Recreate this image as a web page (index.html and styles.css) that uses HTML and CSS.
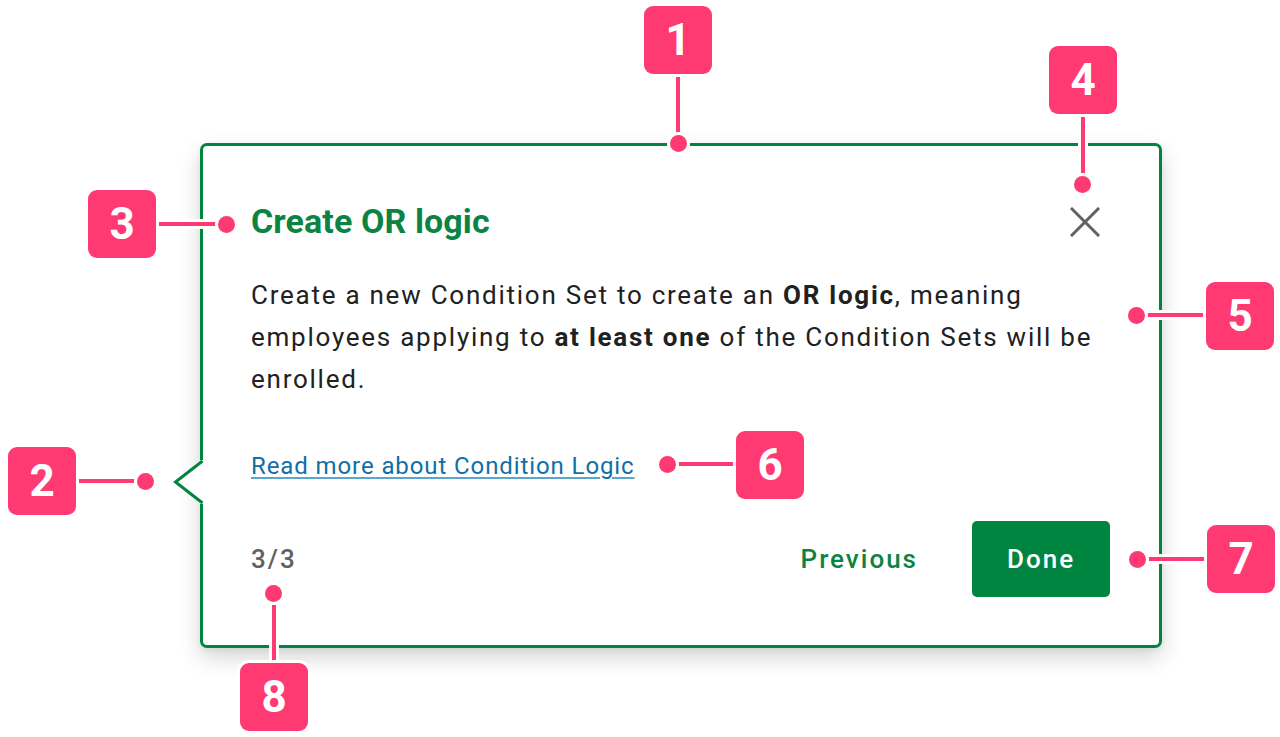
FILE: index.html
```html
<!DOCTYPE html>
<html lang="en">
<head>
<meta charset="utf-8">
<title>Create OR logic</title>
<link rel="stylesheet" href="styles.css">
</head>
<body>
<div class="stage">
  <section class="card">
    <svg class="pointer" width="34" height="50" viewBox="0 0 34 50" aria-hidden="true">
      <path d="M28 2 L3.5 24 L28 46 L34 46 L34 2 Z" fill="#fff"/>
      <path d="M30.5 3 L3.5 24 L30.5 45" fill="none" stroke="#008540" stroke-width="3" stroke-linejoin="miter"/>
    </svg>
    <header class="card-head">
      <h2 class="card-title">Create OR logic</h2>
      <button class="close" aria-label="Close">
        <svg width="30" height="30" viewBox="0 0 30 30"><path d="M2 2 L28 28 M28 2 L2 28" stroke="#616161" stroke-width="3" stroke-linecap="square"/></svg>
      </button>
    </header>
    <p class="card-body">Create a new Condition Set to create an <b>OR logic</b>, meaning employees applying to <b>at least one</b> of the Condition Sets will be enrolled.</p>
    <a class="card-link" href="#">Read more about Condition Logic</a>
    <footer class="card-foot">
      <span class="step">3/3</span>
      <button class="btn-prev">Previous</button>
      <button class="btn-done">Done</button>
    </footer>
  </section>

  <div class="ann a1"><span class="leader"></span><span class="dot"></span><span class="badge">1</span></div>
  <div class="ann a2"><span class="leader"></span><span class="dot"></span><span class="badge">2</span></div>
  <div class="ann a3"><span class="leader"></span><span class="dot"></span><span class="badge">3</span></div>
  <div class="ann a4"><span class="leader"></span><span class="dot"></span><span class="badge">4</span></div>
  <div class="ann a5"><span class="leader"></span><span class="dot"></span><span class="badge">5</span></div>
  <div class="ann a6"><span class="leader"></span><span class="dot"></span><span class="badge">6</span></div>
  <div class="ann a7"><span class="leader"></span><span class="dot"></span><span class="badge">7</span></div>
  <div class="ann a8"><span class="leader"></span><span class="dot"></span><span class="badge">8</span></div>
</div>
</body>
</html>
```
FILE: styles.css
```css
* { box-sizing: border-box; }
html, body { margin: 0; padding: 0; background: #fff; }
body { font-family: Roboto, "Liberation Sans", Arial, sans-serif; color: #212121; }

.stage { position: relative; width: 1280px; height: 737px; overflow: hidden; padding-top: 143px; }

.card {
  position: relative;
  margin-left: 200px;
  width: 962px;
  border: 3px solid #008540;
  border-radius: 7px;
  background: #fff;
  box-shadow: 0 10px 22px rgba(0,0,0,0.16), 0 2px 6px rgba(0,0,0,0.06);
  padding: 55px 49px 48px 48px;
  display: flex;
  flex-direction: column;
}

.pointer { position: absolute; left: -31px; top: 312px; }

.card-head { display: flex; align-items: center; justify-content: space-between; height: 40px; }
.card-title { margin: 0; font-size: 34px; line-height: 40px; font-weight: 700; color: #0b8443; letter-spacing: 0.1px; }
.close { border: 0; background: none; padding: 0; margin: 2px 10px 0 0; width: 30px; height: 30px; display: flex; }

.card-body { margin: 33px 0 0; font-size: 26px; line-height: 42px; color: #212121; letter-spacing: 1.75px; }
.card-body b { font-weight: 700; }

.card-link { margin-top: 50px; align-self: flex-start; font-size: 24px; line-height: 32px; color: #106fa6; letter-spacing: 0.9px; text-decoration: underline; text-decoration-thickness: 2px; text-underline-offset: 3px; text-decoration-color: #5aa6d0; }

.card-foot { margin-top: 39px; display: flex; align-items: center; }
.step { font-size: 26px; font-weight: 500; color: #616161; margin-right: auto; letter-spacing: 2px; }
.btn-prev { border: 0; background: none; padding: 0; font: 500 26px Roboto, sans-serif; letter-spacing: 2px; color: #0b8443; margin-right: 54px; }
.btn-done { border: 0; border-radius: 5px; background: #008540; color: #fff; width: 138px; height: 76px; font: 500 26px Roboto, sans-serif; letter-spacing: 2px; }

/* annotations */
.ann { position: absolute; left: 0; top: 0; width: 0; height: 0; }
.badge {
  position: absolute;
  width: 68px; height: 68px;
  border-radius: 9px;
  background: #ff3a72;
  color: #fff;
  font-size: 44px; font-weight: 700;
  display: flex; align-items: center; justify-content: center;
  box-shadow: 0 0 0 3px #fff;
  z-index: 3;
}
.leader { position: absolute; background: #ff3a72; box-shadow: 0 0 0 3px #fff; z-index: 1; }
.dot { position: absolute; width: 17px; height: 17px; border-radius: 50%; background: #ff3a72; box-shadow: 0 0 0 3px #fff; z-index: 2; }

.a1 .badge { left: 644px; top: 6px; }
.a1 .leader { left: 676px; top: 70px; width: 4px; height: 73px; }
.a1 .dot { left: 670px; top: 135px; }

.a2 .badge { left: 8px; top: 447px; }
.a2 .leader { left: 72px; top: 479px; width: 73px; height: 4px; }
.a2 .dot { left: 137px; top: 473px; }

.a3 .badge { left: 88px; top: 190px; }
.a3 .leader { left: 152px; top: 222px; width: 74px; height: 4px; }
.a3 .dot { left: 218px; top: 216px; }

.a4 .badge { left: 1049px; top: 46px; }
.a4 .leader { left: 1081px; top: 110px; width: 4px; height: 74px; }
.a4 .dot { left: 1074px; top: 176px; }

.a5 .badge { left: 1206px; top: 282px; }
.a5 .leader { left: 1136px; top: 313px; width: 74px; height: 4px; }
.a5 .dot { left: 1128px; top: 307px; }

.a6 .badge { left: 736px; top: 431px; }
.a6 .leader { left: 667px; top: 462px; width: 73px; height: 4px; }
.a6 .dot { left: 659px; top: 456px; }

.a7 .badge { left: 1207px; top: 525px; }
.a7 .leader { left: 1137px; top: 557px; width: 74px; height: 4px; }
.a7 .dot { left: 1129px; top: 551px; }

.a8 .badge { left: 240px; top: 663px; }
.a8 .leader { left: 272px; top: 593px; width: 4px; height: 74px; }
.a8 .dot { left: 265px; top: 585px; }
```
